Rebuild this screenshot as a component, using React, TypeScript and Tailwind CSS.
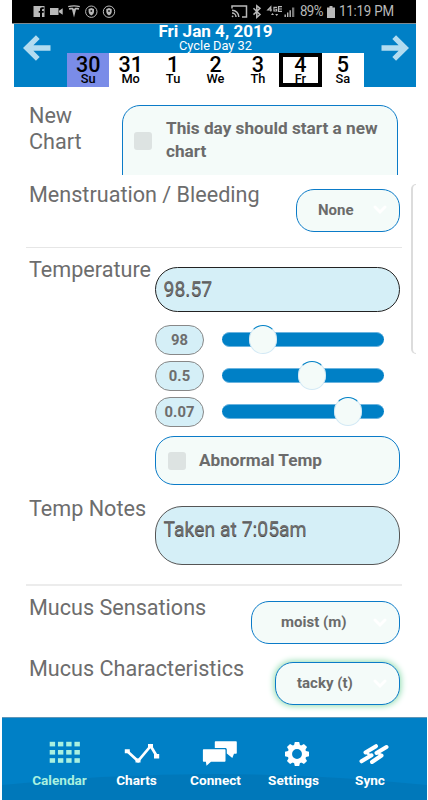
import React, { useState } from 'react';

interface Day { num: number; label: string; }

const DAYS: Day[] = [
  { num: 30, label: 'Su' },
  { num: 31, label: 'Mo' },
  { num: 1, label: 'Tu' },
  { num: 2, label: 'We' },
  { num: 3, label: 'Th' },
  { num: 4, label: 'Fr' },
  { num: 5, label: 'Sa' },
];

const SLIDERS = [
  { value: '98', pos: 25 },
  { value: '0.5', pos: 55.5 },
  { value: '0.07', pos: 78 },
];

function StatusIcons() {
  return (
    <svg width="84" height="24" viewBox="32 0 84 24" fill="#b9b9b9">
      <path fillRule="evenodd" d="M33.500 6h11v11H42v-4.200h1.700V11H42V9.800c0-.6.3-.9.9-.9h.9V7.200h-1.500c-1.600 0-2.300.9-2.300 2.300V11h-1.300v1.800H40V17h-6.500z" />
      <path d="M50 8h8.500v7H50zM59 10.800l3.700-2.500v6.500L59 12.300z" />
      <path d="M68 6c4-1 8-1 12 0l-.4 1.200c-3.700-.9-7.500-.9-11.200 0z" />
      <path d="M68.800 8.200c1.500-.4 2.600-.5 3.900-.4L74 9l1.300-1.200c1.300-.1 2.400 0 3.900.4l-.7 1.700c-.7-.4-1.500-.5-2.500-.5l-2 8-2-8c-1 0-1.800.1-2.500.5z" />
      {[91.3, 109].map(x => (
        <g key={x} transform={`translate(${x} 11.7)`}>
          <circle r="5.700" fill="none" stroke="#b9b9b9" strokeWidth="1" />
          <path d="M-2.700-2.800L0-3.600l2.700.8v2.600C2.700 1.600 1.500 3 0 3.900-1.500 3-2.700 1.600-2.700-.2z" />
          <circle r="1" cy="-.8" fill="#222" />
        </g>
      ))}
    </svg>
  );
}

function SignalIcons() {
  return (
    <svg width="66" height="24" viewBox="230 0 66 24" fill="none" stroke="#b9b9b9" strokeWidth="1.500">
      <path d="M232 8.500V6h14.500v11H242" />
      <path d="M232 10.300c4 0 6.800 3 6.800 6.700M232 13c2.300 0 4 1.800 4 4" />
      <circle cx="232.600" cy="16.300" r=".9" fill="#b9b9b9" stroke="none" />
      <path d="M253.500 8.300l6.500 6.200-3.200 2.800V5.800L260 8.400l-6.500 6.200" />
      <path d="M270.800 11.500V6.800l-3 3.200h4.200M277 7.300h-3v3.700h2.600V9.300h-1.200" strokeWidth="1.200" />
      <path d="M282 6.700h-3.500v4.600h3.500M278.500 9h3.500" strokeWidth="1.200" />
      <path d="M272.500 13l-1.500 2h3zM276.700 16l-1.500-2h3z" fill="#b9b9b9" stroke="none" />
      <g fill="#b9b9b9" stroke="none">
        <path d="M284.500 14.500h1.400V17h-1.400zM287 12.500h1.400V17H287zM289.500 10.300h1.400V17h-1.400z" />
        <path d="M292 7.500h2.300V17H292z" fill="#777" />
      </g>
    </svg>
  );
}

function Battery() {
  return (
    <svg width="8" height="12" viewBox="0 0 8 12" fill="#b9b9b9">
      <path d="M2.500 0h3v1.500H8V12H0V1.500h2.500z" />
    </svg>
  );
}

function Arrow({ flip = false }: { flip?: boolean }) {
  return (
    <svg width="28" height="26" viewBox="0 0 28 26" fill="none" stroke="#b2dcf0" strokeWidth="5.300"
      className={flip ? 'rotate-180' : ''}>
      <path d="M27.500 13H4M14.800 2.200L3.800 13l11 10.800" />
    </svg>
  );
}

function Chevron() {
  return (
    <svg width="14" height="10" viewBox="0 0 14 10" fill="none" stroke="#fff" strokeWidth="3" strokeLinecap="round">
      <path d="M2 2l5 5 5-5" />
    </svg>
  );
}

function Pill({ children, className }: { children: React.ReactNode; className: string }) {
  return (
    <button className={`flex h-[43px] items-center justify-between rounded-[18px] border border-[#0b7bc8] bg-[#f4fbf9] pr-[12px] text-[15px] font-bold text-[#6b6b6b] ${className}`}>
      <span className="whitespace-nowrap">{children}</span>
      <Chevron />
    </button>
  );
}

function CheckSquare() {
  return <span className="block h-[18px] w-[18px] shrink-0 rounded-[3px] bg-[#dde3e2]" />;
}

function NavIcon({ name }: { name: string }) {
  switch (name) {
    case 'Calendar':
      return (
        <svg width="36" height="28" viewBox="47 740 36 28" fill="#a9f0e0" className="ml-[11px]">
          {[0, 1, 2].map(r => [0, 1, 2, 3].map(c => (
            <rect key={`${r}-${c}`} x={49.7 + c * 8.25} y={741.8 + r * 8.2} width="5.400" height="4.600" />
          )))}
        </svg>
      );
    case 'Charts':
      return (
        <svg width="36" height="28" viewBox="124 740 36 28" fill="#fff" className="ml-[10px]">
          <path d="M127.300 751.300L138 761l12.700-15 6 10" fill="none" stroke="#fff" strokeWidth="2.700" />
          <path d="M124.800 749.200h5v4h-5zM135.500 758.500h5v4h-5zM148 744h5v4h-5zM154 754h5.200v4.500H154z" />
        </svg>
      );
    case 'Connect':
      return (
        <svg width="36" height="28" viewBox="201.500 740 36 28" fill="#fff" className="ml-[8px]">
          <path d="M215.300 741.200h20c.6 0 1 .4 1 1v10.500c0 .6-.4 1-1 1h-1.800l-1.700 4.300-5.500-4.500v-4c0-1-.6-1.600-1.600-1.600h-10.400v-5.700c0-.6.4-1 1-1z" />
          <path d="M203.400 749.300H224c.6 0 1 .4 1 1v10.400c0 .6-.4 1-1 1h-13.500l-4.500 4.100-.6-4.100h-2c-.6 0-1-.4-1-1v-10.400c0-.6.4-1 1-1z" />
        </svg>
      );
    case 'Settings':
      return (
        <svg width="28" height="28" viewBox="-14 -14 28 28" className="ml-[7px]">
          {[0, 45, 90, 135, 180, 225, 270, 315].map(a => (
            <path key={a} d="M-3.200-8l1-4h4.400l1 4z" fill="#fff" transform={`rotate(${a})`} />
          ))}
          <circle r="7.200" fill="none" stroke="#fff" strokeWidth="4.500" />
        </svg>
      );
    default:
      return (
        <svg width="30" height="28" viewBox="358.500 740 30 28" fill="none" stroke="#fff" strokeWidth="4" strokeLinecap="round" className="ml-[7px]">
          <path d="M365 752.500l10.500-6.300M361 761.300l10-6M371.500 762l9.500-6.500M376 753l10-6" />
          <path d="M365.500 752.500l4.500 3M377 752.500l4 3" strokeWidth="2.500" />
        </svg>
      );
  }
}

const NAV = [
  { name: 'Calendar', width: 'w-[77px]' },
  { name: 'Charts', width: 'w-[77px]' },
  { name: 'Connect', width: 'w-[81px]' },
  { name: 'Settings', width: 'w-[75px]' },
  { name: 'Sync', width: 'w-[78px]' },
];

const LABEL = 'text-[21.600px] leading-[26px] text-[#6d6d6d] whitespace-nowrap';

export default function App() {
  const [selected, setSelected] = useState(5);
  const [tab, setTab] = useState('Calendar');

  return (
    <div className="relative flex h-[800px] w-[428px] flex-col overflow-hidden bg-white font-['Roboto',sans-serif]">
      {/* Status bar */}
      <div className="ml-[12px] flex h-6 w-[404px] shrink-0 items-center border-b border-[#7c8a92] bg-black pl-5 text-[#b9b9b9]">
        <StatusIcons />
        <div className="ml-[114px] flex items-center">
          <SignalIcons />
          <span className="ml-1 w-[25px] scale-y-110 whitespace-nowrap text-[13.300px] tracking-[-0.600px]">89%</span>
          <span className="mr-[4px] ml-[2px]"><Battery /></span>
          <span className="scale-y-110 whitespace-nowrap text-[13.300px] tracking-[-0.200px]">11:19 PM</span>
        </div>
      </div>

      {/* Date header */}
      <header className="ml-[13.500px] flex h-[63px] w-[402px] shrink-0 justify-between bg-[#0080c6]">
        <button className="mt-[11px] ml-[9px] h-[26px]"><Arrow /></button>
        <div className="flex w-[297px] flex-col">
          <div className="flex h-[29px] flex-col items-center text-white">
            <div className="text-[17.100px] leading-[14px] font-bold">Fri Jan 4, 2019</div>
            <div className="text-[12.800px] leading-[15px]">Cycle Day 32</div>
          </div>
          <div className="grid h-[34px] grid-cols-7 bg-white text-center text-black">
            {DAYS.map((d, i) => (
              <button key={d.num} onClick={() => setSelected(i)}
                className={`flex h-[34px] flex-col items-center justify-center ${i === 0 ? 'bg-[#7a8ce8]' : ''} ${
                  i === selected ? 'border-4 border-black' : ''
                }`}>
                <span className="mt-[2px] text-[21.500px] leading-[16px] font-medium">{d.num}</span>
                <span className="text-[12.800px] leading-[12px] font-medium">{d.label}</span>
              </button>
            ))}
          </div>
        </div>
        <button className="mt-[11px] mr-[7px] h-[26px]"><Arrow flip /></button>
      </header>

      <main className="ml-[26px] flex h-[630px] w-[376px] shrink-0 flex-col">
        <section className="flex h-[88px] shrink-0 overflow-hidden pt-[16px] pl-[3px]">
          <div className="w-[93px] text-[21.600px] leading-[25.500px] text-[#6d6d6d]">New<br />Chart</div>
          <div className="mt-[2px] flex h-[90px] w-[276px] rounded-[18px] border border-[#0b7bc8] bg-[#f4fbf9] pl-[11px]">
            <div className="mt-[26px]"><CheckSquare /></div>
            <div className="mt-[11px] ml-[14px] w-[225px] text-[17.200px] leading-[22.500px] font-bold text-[#6b6b6b]">
              This day should start a new chart
            </div>
          </div>
        </section>

        <section className="flex h-[72px] shrink-0 justify-between pt-[13.500px] pr-[2px] pl-[3px]">
          <div className={`-mt-[7px] ${LABEL}`}>Menstruation / Bleeding</div>
          <Pill className="w-[104px] pl-[21px]">None</Pill>
        </section>

        <section className="flex h-[337px] shrink-0 flex-col border-t border-[#e6e6e6] pr-[2px] pl-[3px]">
          <div className="flex pt-[19px]">
            <div className={`-mt-[10px] w-[126px] ${LABEL}`}>Temperature</div>
            <div className="w-[245px]">
              <div className="flex h-[45px] items-center rounded-full border border-[#222] bg-[#d5eff7] pl-[7.500px] text-[19.400px] text-[#707070] [text-shadow:0_1px_0_#4a4a4a]">98.57</div>
              <div className="mt-[13px] flex flex-col gap-[6px]">
                {SLIDERS.map(s => (
                  <div key={s.value} className="flex h-[30px] items-center">
                    <div className="flex h-[30px] w-[49px] items-center justify-center rounded-full border border-[#888] bg-[#d5eff7] text-[14.800px] font-bold text-[#6d6d6d]">{s.value}</div>
                    <div className="relative -mt-[1px] ml-[18px] h-[15px] w-[162px] rounded-full border-y border-[#6bb4df] bg-[#0080c6]">
                      <span className="absolute top-[-8px] h-[29px] w-[28px] -translate-x-1/2 rounded-full border border-[#d3e9f5] border-t-[#0080c6] bg-[#f4fbf9]" style={{ left: `${s.pos}%` }} />
                    </div>
                  </div>
                ))}
              </div>
              <div className="mt-[9px] flex h-[49px] items-center rounded-[19px] border border-[#0b7bc8] bg-[#f4fbf9] pl-[12px]">
                <CheckSquare />
                <span className="ml-[13px] text-[17.200px] font-bold text-[#6b6b6b]">Abnormal Temp</span>
              </div>
            </div>
          </div>
          <div className="mt-[21px] flex">
            <div className={`-mt-[10px] w-[126px] ${LABEL}`}>Temp Notes</div>
            <div className="h-[59px] w-[245px] rounded-[27px] border border-[#555] bg-[#d5eff7] pt-[9px] pl-[7.500px] text-[19.400px] leading-[28px] text-[#707070] [text-shadow:0_1px_0_#4a4a4a]">Taken at 7:05am</div>
          </div>
        </section>

        <section className="flex flex-col gap-[18px] border-t-2 border-[#ececec] pt-[15px] pr-[2px] pl-[3px]">
          <div className="flex justify-between">
            <div className={`-mt-[6px] ${LABEL}`}>Mucus Sensations</div>
            <Pill className="w-[149px] pl-[29px]">moist (m)</Pill>
          </div>
          <div className="flex justify-between">
            <div className={`-mt-[6px] ${LABEL}`}>Mucus Characteristics</div>
            <Pill className="w-[125px] pl-[21px] shadow-[0_0_6px_1px_#8fdcb0]">tacky (t)</Pill>
          </div>
        </section>
      </main>

      {/* Edge of the side drawer */}
      <div className="absolute top-[184px] left-[411px] h-[170px] w-[5px] rounded-l-[5px] border-y border-l-2 border-[#dcdcdc]" />

      {/* Bottom tabs */}
      <nav className="relative ml-[2px] flex h-[83px] w-[425px] shrink-0 overflow-hidden border-t border-[#5f96b8] bg-[#0080c6] pl-[19px]">
        <svg width="425" height="83" viewBox="0 0 425 83" className="absolute top-0 left-0">
          <path d="M0 67Q212 45 425 67v16H0z" fill="#0078ba" />
        </svg>
        {NAV.map(n => (
          <button key={n.name} onClick={() => setTab(n.name)}
            className={`relative flex flex-col items-center pt-[22px] text-[13.600px] leading-[18px] font-bold ${n.width} ${
              tab === n.name ? 'text-[#a9f0e0]' : 'text-white'
            }`}>
            <NavIcon name={n.name} />
            <span className="mt-[3px]">{n.name}</span>
          </button>
        ))}
      </nav>
    </div>
  );
}
